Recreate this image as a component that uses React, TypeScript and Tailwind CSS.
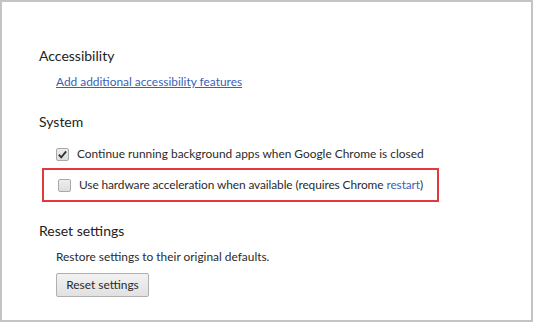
import React from 'react';

const Check = ({ checked }: { checked?: boolean }) => (
  <span className="relative inline-flex h-[13px] w-[13px] shrink-0 items-center justify-center rounded-[2px] border border-[#a9a9a9] bg-gradient-to-b from-[#ededed] to-[#dedede]">
    {checked && (
      <svg viewBox="0 0 12 12" className="h-[11px] w-[11px]">
        <path d="M2 6.2 4.6 9 10 2.6" fill="none" stroke="#333" strokeWidth={2} />
      </svg>
    )}
  </span>
);

const App: React.FC = () => {
  return (
    <div className="h-[322px] w-[533px] border-2 border-[#c4c4c4] bg-white text-[11.9px] text-[#2b2b2b]" style={{ fontFamily: 'Lato, "Open Sans", sans-serif' }}>
      <div className="pl-[37px] pt-[44px]">
        <h3 className="text-[14px] leading-[20px] text-[#222]">Accessibility</h3>
        <div className="mt-[7px] pl-[17px] leading-[18px]">
          <a href="#" className="text-[#3b5fb8] underline">Add additional accessibility features</a>
        </div>

        <h3 className="mt-[21px] text-[14px] leading-[20px] text-[#222]">System</h3>
        <div className="mt-[13px] flex items-center gap-[8px] pl-[17px] leading-[18px]">
          <Check checked />
          <span>Continue running background apps when Google Chrome is closed</span>
        </div>
        <div className="mt-[5px] ml-[3px] flex h-[34px] w-[397px] items-center gap-[8px] border-2 border-[#e2393f] pl-[14px] leading-[18px]">
          <Check />
          <span className="whitespace-nowrap tracking-[-0.1px]">
            Use hardware acceleration when available (requires Chrome <a href="#" className="text-[#3b5fb8]">restart</a>)
          </span>
        </div>

        <h3 className="mt-[19px] text-[14px] leading-[20px] text-[#222]">Reset settings</h3>
        <div className="mt-[7px] pl-[17px] leading-[18px]">Restore settings to their original defaults.</div>
        <div className="mt-[7px] pl-[17px]">
          <button className="h-[24px] w-[93px] rounded-[2px] border border-[#b0b0b0] bg-gradient-to-b from-[#f2f2f2] to-[#e1e1e1] leading-[20px]">Reset settings</button>
        </div>
      </div>
    </div>
  );
};

export default App;
